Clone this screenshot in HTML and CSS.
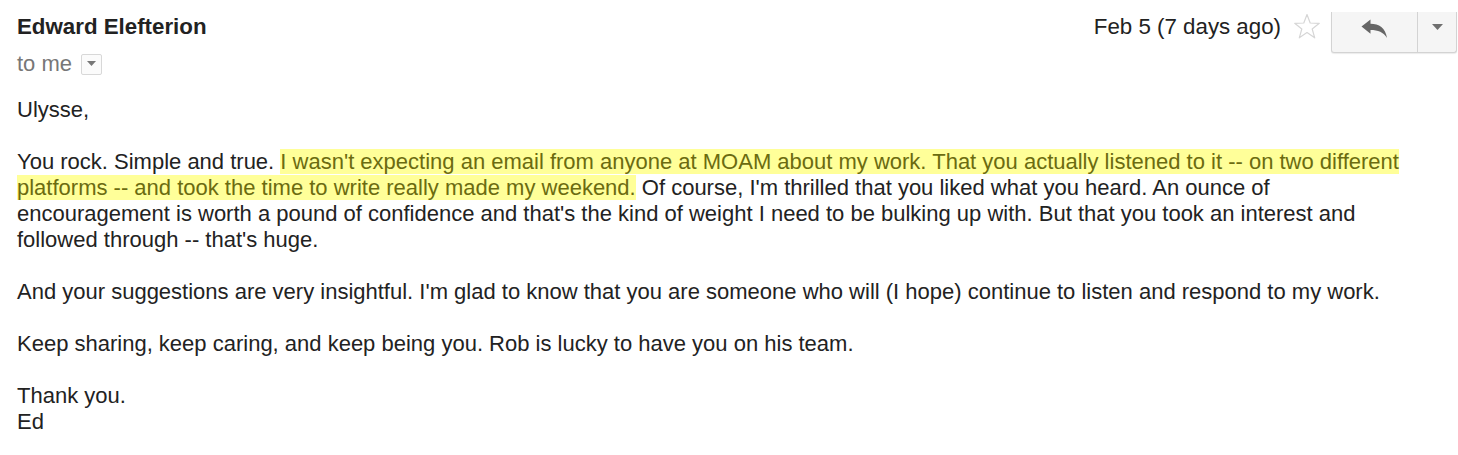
FILE: index.html
```html
<!DOCTYPE html>
<html>
<head>
<meta charset="utf-8">
<link rel="stylesheet" href="styles.css">
</head>
<body>
<div class="mail">
  <div class="header">
    <div class="sender">
      <div class="name">Edward Elefterion</div>
      <div class="to">to me <span class="to-drop"><svg width="9" height="6" viewBox="0 0 9 6"><path d="M0 0 H9 L4.5 5 Z" fill="#777"/></svg></span></div>
    </div>
    <div class="meta">
      <span class="date">Feb 5 (7 days ago)</span>
      <span class="star"><svg width="28" height="27" viewBox="0 0 28 27"><path d="M14 1.5 L17.2 10 L26.3 10.3 L19.2 16 L21.7 24.8 L14 19.6 L6.3 24.8 L8.8 16 L1.7 10.3 L10.8 10 Z" fill="none" stroke="#d6d6d6" stroke-width="1.2" stroke-linejoin="round"/></svg></span>
      <div class="btns">
        <div class="btn reply"><svg width="28" height="20" viewBox="0 0 28 20"><path d="M0.5 7.5 L9.5 0.5 L9.5 4.8 C18 4.8 24.5 9 26 19 C22.5 13.2 17 11 9.5 11 L9.5 14.8 Z" fill="#666"/></svg></div>
        <div class="btn more"><svg width="11" height="6" viewBox="0 0 11 6"><path d="M0 0 H11 L5.5 6 Z" fill="#6f6f6f"/></svg></div>
      </div>
    </div>
  </div>
  <div class="body">
    <p>Ulysse,</p>
    <p>You rock. Simple and true. <span class="hl">I wasn't expecting an email from anyone at MOAM about my work. That you actually listened to it -- on two different platforms -- and took the time to write really made my weekend.</span> Of course, I'm thrilled that you liked what you heard. An ounce of encouragement is worth a pound of confidence and that's the kind of weight I need to be bulking up with. But that you took an interest and followed through -- that's huge.</p>
    <p>And your suggestions are very insightful. I'm glad to know that you are someone who will (I hope) continue to listen and respond to my work.</p>
    <p>Keep sharing, keep caring, and keep being you. Rob is lucky to have you on his team.</p>
    <p>Thank you.<br>Ed</p>
  </div>
</div>
</body>
</html>
```
FILE: styles.css
```css
html, body {
  margin: 0;
  padding: 0;
  background: #fff;
}
body {
  font-family: "Liberation Sans", Arial, sans-serif;
  font-size: 22px;
  line-height: 26px;
  color: #222;
}
.mail {
  padding: 0 0 0 17px;
  width: 1441px;
  box-sizing: border-box;
}
.header {
  display: flex;
  justify-content: space-between;
  align-items: flex-start;
}
.sender {
  padding-top: 14px;
}
.name {
  font-weight: bold;
  font-size: 22.3px;
  color: #222;
}
.to {
  margin-top: 11px;
  color: #777;
  display: flex;
  align-items: center;
}
.to-drop {
  display: inline-flex;
  align-items: center;
  justify-content: center;
  width: 19px;
  height: 19px;
  border: 1px solid #d8d8d8;
  border-radius: 2px;
  margin-left: 9px;
  background: #fbfbfb;
}
.meta {
  display: flex;
  align-items: flex-start;
  margin-right: -16px;
}
.date {
  margin-top: 14px;
  font-size: 22.3px;
  color: #222;
}
.star {
  margin: 13px 0 0 12px;
  display: inline-flex;
}
.btns {
  display: flex;
  margin: 12px 0 0 10px;
  height: 40px;
  border: 1px solid #d3d3d3;
  border-top: none;
  border-radius: 0 0 3px 3px;
  background: #f5f5f5;
  box-shadow: 0 1px 1px rgba(0,0,0,0.08);
}
.btn {
  display: flex;
  align-items: center;
  justify-content: center;
}
.reply {
  width: 85px;
  border-right: 1px solid #d3d3d3;
}
.reply svg {
  margin-top: -6px;
}
.more {
  width: 38px;
}
.more svg {
  margin-top: -10px;
}
.body {
  padding-top: 20px;
  width: 1400px;
}
.body p {
  margin: 0 0 26px 0;
}
.hl {
  background: #ffff99;
  color: #6b6b10;
  padding: 0;
}
```
